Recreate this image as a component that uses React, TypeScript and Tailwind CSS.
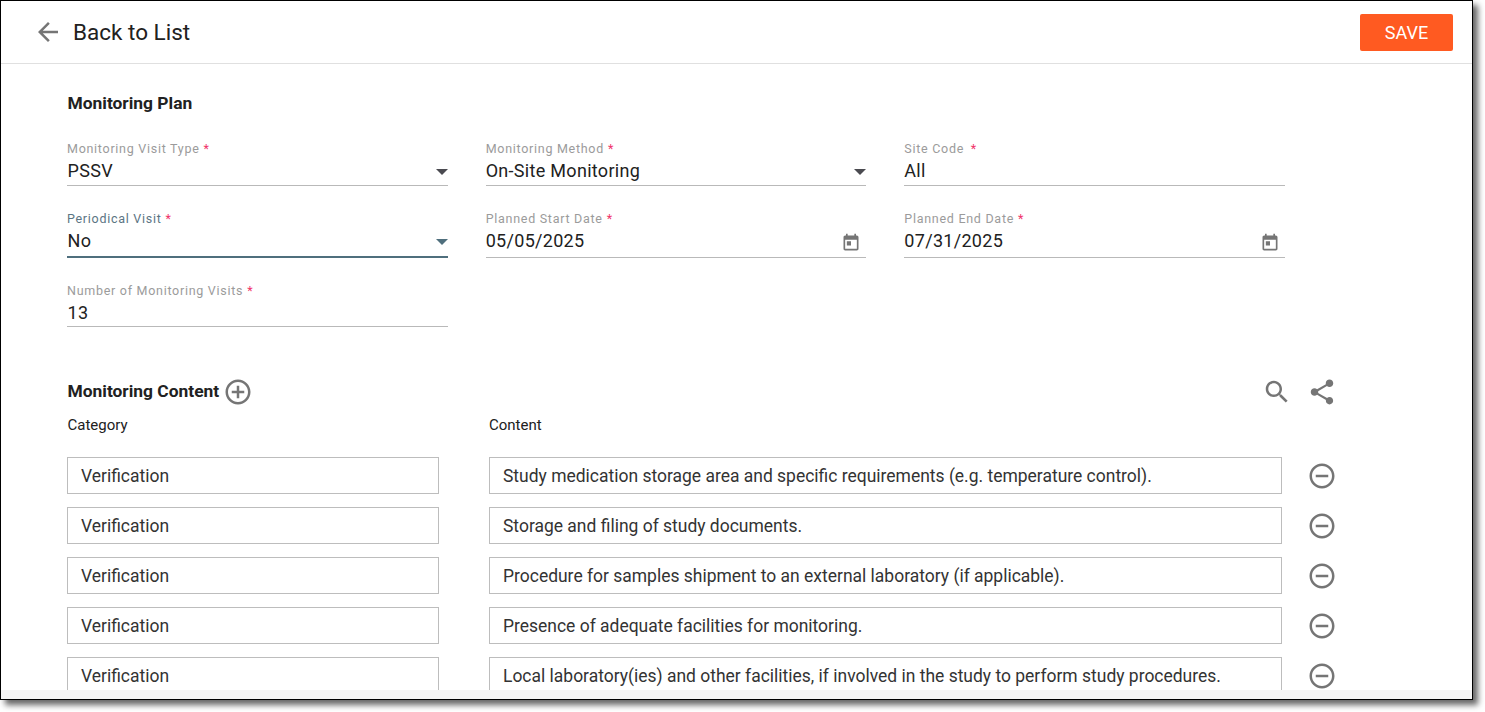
const rows = [
  'Study medication storage area and specific requirements (e.g. temperature control).',
  'Storage and filing of study documents.',
  'Procedure for samples shipment to an external laboratory (if applicable).',
  'Presence of adequate facilities for monitoring.',
  'Local laboratory(ies) and other facilities, if involved in the study to perform study procedures.',
];

const Caret = ({ active }: { active?: boolean }) => (
  <svg width="12" height="6" viewBox="0 0 12 6" className={active ? 'fill-[#4f6f7d]' : 'fill-[#4a4a50]'}>
    <path d="M0 0h12L6 6z" />
  </svg>
);

// material style icons, same shapes the screenshot uses
const Icon = ({ d, size = 30 }: { d: string; size?: number }) => (
  <svg width={size} height={size} viewBox="0 0 24 24" className="shrink-0 fill-[#757575]">
    <path d={d} />
  </svg>
);

const ARROW_BACK = 'M20 11H7.830l5.590-5.590L12 4l-8 8 8 8 1.410-1.410L7.830 13H20v-2z';
const TODAY =
  'M19 3h-1V1h-2v2H8V1H6v2H5c-1.110 0-1.990.9-1.990 2L3 19c0 1.100.89 2 2 2h14c1.100 0 2-.9 2-2V5c0-1.100-.9-2-2-2zm0 16H5V8h14v11zM7 10h5v5H7z';
const ADD_CIRCLE =
  'M13 7h-2v4H7v2h4v4h2v-4h4v-2h-4V7zm-1-5C6.480 2 2 6.480 2 12s4.480 10 10 10 10-4.480 10-10S17.520 2 12 2zm0 18c-4.410 0-8-3.590-8-8s3.590-8 8-8 8 3.590 8 8-3.590 8-8 8z';
const REMOVE_CIRCLE =
  'M7 11v2h10v-2H7zm5-9C6.480 2 2 6.480 2 12s4.480 10 10 10 10-4.480 10-10S17.520 2 12 2zm0 18c-4.410 0-8-3.590-8-8s3.590-8 8-8 8 3.590 8 8-3.590 8-8 8z';
const SEARCH =
  'M15.500 14h-.79l-.28-.27C15.410 12.590 16 11.110 16 9.500 16 5.910 13.090 3 9.500 3S3 5.910 3 9.500 5.910 16 9.500 16c1.610 0 3.090-.59 4.230-1.570l.27.28v.79l5 4.990L20.490 19l-4.990-5zm-6 0C7.010 14 5 11.990 5 9.500S7.010 5 9.500 5 14 7.010 14 9.500 11.990 14 9.500 14z';
const SHARE =
  'M18 16.080c-.76 0-1.440.3-1.960.77L8.910 12.700c.05-.23.09-.46.09-.7s-.04-.47-.09-.7l7.050-4.110c.54.5 1.250.81 2.040.81 1.660 0 3-1.340 3-3s-1.340-3-3-3-3 1.340-3 3c0 .24.04.47.09.7L8.040 9.810C7.500 9.310 6.790 9 6 9c-1.660 0-3 1.340-3 3s1.340 3 3 3c.79 0 1.500-.31 2.040-.81l7.120 4.160c-.05.21-.08.43-.08.65 0 1.610 1.310 2.920 2.920 2.920s2.920-1.310 2.920-2.920-1.310-2.920-2.920-2.920z';

interface FieldProps {
  label: string;
  value: string;
  icon?: 'caret' | 'date';
  active?: boolean;
  height?: string;
  first?: boolean;
  labelGap?: string;
}

const Field = ({ label, value, icon, active, height, first, labelGap }: FieldProps) => (
  <div className="w-full">
    <div
      className={`h-[16px] text-[12.500px] leading-[16px] tracking-[0.72px] ${
        active ? 'text-[#5b7583]' : 'text-[#9b9b9b]'
      }`}
    >
      {label}
      <span className={`text-[#f0346a] ${labelGap ?? 'ml-1'}`}>*</span>
    </div>
    <div className={`border-b ${height ?? 'h-[29px]'} ${active ? 'border-b-2 border-[#4f6f7d]' : 'border-[#b9b9b9]'}`}>
      <div
        className={`flex h-[27px] items-center justify-between text-[18px] tracking-[0.3px] text-[#212121] ${
          first ? 'pl-[0.5px]' : ''
        }`}
      >
        <span>{value}</span>
        {icon === 'caret' && (
          <span className="mt-[3px] flex">
            <Caret active={active} />
          </span>
        )}
        {icon === 'date' && (
          <span className="mr-[5px] mt-[4px] flex">
            <Icon d={TODAY} size={20} />
          </span>
        )}
      </div>
    </div>
  </div>
);

const App = () => {
  return (
    <div className="h-[712px] w-[1485px] overflow-hidden bg-white font-['Roboto',sans-serif]">
      <div className="flex h-[700px] w-[1473px] flex-col overflow-hidden border border-black bg-white shadow-[5px_5px_6px_rgba(0,0,0,0.6)]">
        {/* Header */}
        <div className="flex h-[63px] shrink-0 items-center justify-between border-b border-[#e0e0e0] pl-[32px] pr-[19px]">
          <div className="flex items-center gap-[10px]">
            <Icon d={ARROW_BACK} />
            <span className="pt-[2px] text-[22.500px] text-[#212121]">Back to List</span>
          </div>
          <button className="mb-[-1px] h-[37px] w-[93px] rounded-[2px] bg-[#ff5a21] text-[18px] text-white">SAVE</button>
        </div>

        {/* Form */}
        <div className="min-h-0 flex-1 overflow-hidden pl-[66px]">
          <h2 className="mt-[28px] h-[22px] pl-[0.5px] text-[17.400px] leading-[22px] font-bold text-[#212121]">
            Monitoring Plan
          </h2>
          <div className="mt-[27px] grid w-[1218px] grid-cols-3 gap-x-[38px]">
            <Field label="Monitoring Visit Type" value="PSSV" icon="caret" first />
            <Field label="Monitoring Method" value="On-Site Monitoring" icon="caret" />
            <Field label="Site Code " value="All" labelGap="ml-[3px]" />
          </div>
          <div className="mt-[25px] grid w-[1218px] grid-cols-3 gap-x-[38px]">
            <Field label="Periodical Visit" value="No" icon="caret" active first height="h-[31px]" />
            <Field label="Planned Start Date" value="05/05/2025" icon="date" height="h-[31px]" />
            <Field label="Planned End Date" value="07/31/2025" icon="date" height="h-[31px]" />
          </div>
          <div className="mt-[25px] w-[381px]">
            <Field label="Number of Monitoring Visits" value="13" first height="h-[28px]" />
          </div>

          {/* Monitoring Content */}
          <div className="mt-[51px] flex h-[28px] w-[1270px] items-center justify-between">
            <div className="flex items-center gap-[4px] pl-[0.5px]">
              <h2 className="pb-[2px] text-[17.400px] font-bold text-[#212121]">Monitoring Content</h2>
              <Icon d={ADD_CIRCLE} />
            </div>
            <div className="flex items-center gap-[15px]">
              <Icon d={SEARCH} />
              <Icon d={SHARE} />
            </div>
          </div>
          <div className="mt-[11px] flex h-[16px] items-center pl-[0.5px] text-[15px] text-[#212121]">
            <span className="w-[421.500px]">Category</span>
            <span>Content</span>
          </div>
          <div className="mt-[24px] flex flex-col gap-[13px]">
            {rows.map((text) => (
              <div key={text} className="flex items-center">
                <div className="flex h-[37px] w-[372px] items-center border border-[#bdbdbd] pl-[13px] pt-[2px] text-[17.480px] text-[#333333]">
                  Verification
                </div>
                <div className="ml-[50px] flex h-[37px] w-[793px] items-center border border-[#bdbdbd] pl-[13px] pt-[2px] text-[17.480px] text-[#333333]">
                  {text}
                </div>
                <span className="ml-[25px] flex">
                  <Icon d={REMOVE_CIRCLE} />
                </span>
              </div>
            ))}
          </div>
        </div>

        {/* Bottom strip */}
        <div className="h-[9px] shrink-0 bg-[#f5f5f5]" />
      </div>
    </div>
  );
};

export default App;
